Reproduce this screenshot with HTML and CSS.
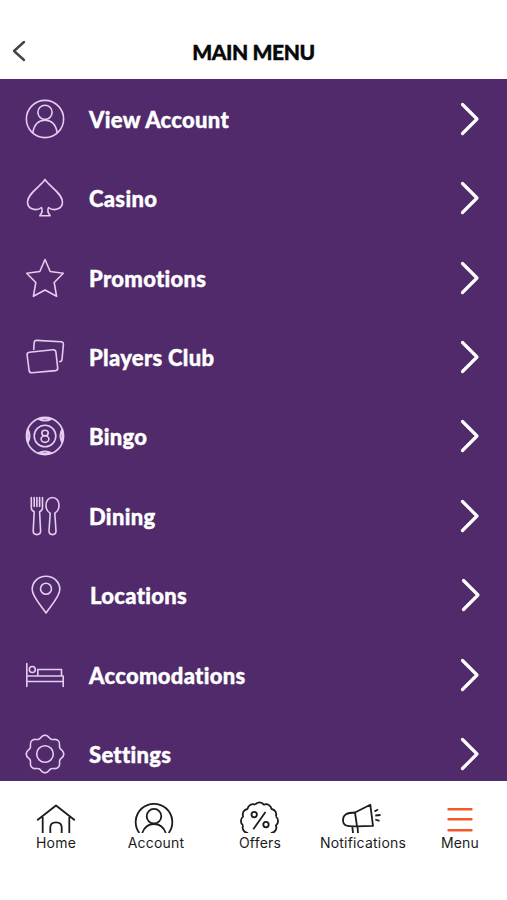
FILE: index.html
```html
<!DOCTYPE html>
<html lang="en">
<head>
    <meta charset="UTF-8">
    <meta name="viewport" content="width=device-width, initial-scale=1.0">
    <title>Main Menu</title>
    <link rel="stylesheet" href="styles.css">
</head>
<body>

<header>
    <a href="#" class="back">
        <svg width="14" height="22" viewBox="0 0 14 22"><path d="M12 2L2 11L12 20"/></svg>
    </a>
    <h1>MAIN MENU</h1>
</header>

<main class="menu">
    <a href="#" class="menu-item">
        <svg class="icon" viewBox="0 0 40 40"><circle cx="20" cy="20" r="18.6"/><circle cx="20" cy="13.3" r="7.1"/><path d="M7.8 33.5C9.2 25.5 13.8 21.2 20 21.2S30.8 25.5 32.2 33.5"/></svg>
        <span>View Account</span>
        <svg class="arrow" viewBox="0 0 20 34"><path d="M2.5 2.5L17 17L2.5 31.5"/></svg>
    </a>
    <a href="#" class="menu-item">
        <svg class="icon" viewBox="0 0 40 40"><path d="M20 1.5C15.5 8.5 2.5 15.5 2.5 24C2.5 31.5 11.5 33.5 16.5 29.5C17.8 32 17 35 14.8 37.8H25.2C23 35 22.2 32 23.5 29.5C28.5 33.5 37.5 31.5 37.5 24C37.5 15.5 24.5 8.5 20 1.5Z"/></svg>
        <span>Casino</span>
        <svg class="arrow" viewBox="0 0 20 34"><path d="M2.5 2.5L17 17L2.5 31.5"/></svg>
    </a>
    <a href="#" class="menu-item">
        <svg class="icon" viewBox="0 0 40 40"><path d="M20 1.5L25.2 13.5L38.3 15.2L29.2 24.5L31.6 38.3L20 32L8.4 38.3L10.8 24.5L1.7 15.2L14.8 13.5Z"/></svg>
        <span>Promotions</span>
        <svg class="arrow" viewBox="0 0 20 34"><path d="M2.5 2.5L17 17L2.5 31.5"/></svg>
    </a>
    <a href="#" class="menu-item">
        <svg class="icon" viewBox="0 0 40 40"><path d="M4.3 15.2L28 12.8Q30.5 12.6 30.9 15L32.7 31Q32.9 33.3 30.5 33.6L7 35.7Q4.5 35.9 4.1 33.5L2.1 18Q1.9 15.5 4.3 15.2Z"/><path d="M8.7 12.5L9.2 5.5Q9.5 3.3 11.7 3.4L36 4.8Q38.6 5 38.4 7.5L37 22.5Q36.8 24.6 34.8 24.6"/></svg>
        <span>Players Club</span>
        <svg class="arrow" viewBox="0 0 20 34"><path d="M2.5 2.5L17 17L2.5 31.5"/></svg>
    </a>
    <a href="#" class="menu-item">
        <svg class="icon" viewBox="0 0 40 40">
            <circle cx="20" cy="20" r="18.6"/><circle cx="20" cy="20" r="10.8"/>
            <ellipse cx="20" cy="17" rx="3.2" ry="2.8"/><ellipse cx="20" cy="23.1" rx="3.9" ry="3.3"/>
            <path d="M13.5 3Q20 6.5 26.5 3M13.5 37Q20 33.5 26.5 37M3 13.5Q6.5 20 3 26.5M37 13.5Q33.5 20 37 26.5M15 2.8H25M15 37.2H25M2.8 15V25M37.2 15V25"/>
        </svg>
        <span>Bingo</span>
        <svg class="arrow" viewBox="0 0 20 34"><path d="M2.5 2.5L17 17L2.5 31.5"/></svg>
    </a>
    <a href="#" class="menu-item">
        <svg class="icon" viewBox="0 0 40 40">
            <path d="M6.3 1.5V11.5Q6.3 14.5 9.2 15.8L8.2 35Q8.2 38.6 11.9 38.6T15.6 35L14.6 15.8Q17.5 14.5 17.5 11.5V1.5M9.2 1.5V10.5M11.9 1.5V10.5M14.6 1.5V10.5"/>
            <path d="M25.2 17.3C22.2 15.5 21 12.5 21 9.5C21 5 23.5 1.5 27.5 1.5S34 5 34 9.5C34 12.5 32.8 15.5 29.8 17.3L31 35Q31 38.6 27.5 38.6T24 35Z"/>
        </svg>
        <span>Dining</span>
        <svg class="arrow" viewBox="0 0 20 34"><path d="M2.5 2.5L17 17L2.5 31.5"/></svg>
    </a>
    <a href="#" class="menu-item shifted">
        <svg class="icon" viewBox="0 0 40 40"><path d="M20 38C15 30.5 6.2 21.5 6.2 14.5C6.2 7 12 1.3 20 1.3S33.8 7 33.8 14.5C33.8 21.5 25 30.5 20 38Z"/><circle cx="20" cy="13.7" r="5.5"/></svg>
        <span>Locations</span>
        <svg class="arrow" viewBox="0 0 20 34"><path d="M2.5 2.5L17 17L2.5 31.5"/></svg>
    </a>
    <a href="#" class="menu-item">
        <svg class="icon" viewBox="0 0 40 40"><path d="M1.8 8.5V31.5M1.8 21H38.2V31.5M1.8 26.5H38.2M12.8 21V14.5H36.5V21"/><circle cx="7.3" cy="14.5" r="3"/></svg>
        <span>Accomodations</span>
        <svg class="arrow" viewBox="0 0 20 34"><path d="M2.5 2.5L17 17L2.5 31.5"/></svg>
    </a>
    <a href="#" class="menu-item">
        <svg class="icon" viewBox="0 0 40 40">
            <path id="cog" d="M20 1.3C24 1.3 23.3 4.05 26.1 5.2C28.9 6.35 30.6 4 33.3 6.7C36 9.4 33.65 11.1 34.8 13.9C35.95 16.7 38.7 16 38.7 20"/>
            <use href="#cog" transform="rotate(90 20 20)"/>
            <use href="#cog" transform="rotate(180 20 20)"/>
            <use href="#cog" transform="rotate(270 20 20)"/>
            <circle cx="20" cy="20" r="8.3"/>
        </svg>
        <span>Settings</span>
        <svg class="arrow" viewBox="0 0 20 34"><path d="M2.5 2.5L17 17L2.5 31.5"/></svg>
    </a>
</main>

<nav class="tabs">
    <a href="#">
        <svg viewBox="0 0 40 32"><path d="M1.2 19.3L20 4.5L38.8 19.3M6.7 16V32M33.3 16V32M14.3 32V26.5Q14.3 21.3 20 21.3T25.7 26.5V32"/></svg>
        Home
    </a>
    <a href="#" class="nudged">
        <svg viewBox="0 0 40 32"><path d="M5.3 32A18.3 18.3 0 1 1 34.7 32M8.2 32Q11.5 23 20 23T31.8 32"/><circle cx="20" cy="15.2" r="7.3"/></svg>
        Account
    </a>
    <a href="#">
        <svg viewBox="0 0 40 32">
            <g transform="translate(19.5 20)">
                <path id="seal" d="M-4.4 -16.4A5.5 5.5 0 0 1 4.4 -16.4A5.5 5.5 0 0 1 12 -12A5.5 5.5 0 0 1 16.4 -4.4"/>
                <use href="#seal" transform="rotate(90)"/>
                <use href="#seal" transform="rotate(180)"/>
                <use href="#seal" transform="rotate(270)"/>
            </g>
            <circle cx="14.2" cy="13.6" r="2.7"/><circle cx="26" cy="23.6" r="2.7"/><path d="M25.5 11L13.3 28.3"/>
        </svg>
        Offers
    </a>
    <a href="#" class="nudged">
        <svg viewBox="0 0 40 32"><path d="M14 11.5L29.3 3.7L32 24.8L16 25.3ZM14 11.5C6 11.5 2 13.5 2 19C2 25 6 25.5 16 25.3M11.3 25.5L12 32M16.5 25.5L17 32M33.5 10.5L37 8.5M34.3 14.5L39.5 14M34.3 18.5L38.5 19.8"/></svg>
        Notifications
    </a>
    <a href="#" class="active">
        <svg viewBox="0 0 40 32"><path d="M8.5 8.3H31.5M8.5 18.3H31.5M8.5 29.3H31.5"/></svg>
        Menu
    </a>
</nav>

</body>
</html>
```
FILE: styles.css
```css
* {
    box-sizing: border-box;
}
body {
    margin: 0;
    height: 900px;
    overflow: hidden;
    background-color: #fff;
    font-family: Lato, sans-serif;
}
a {
    color: inherit;
    text-decoration: none;
}
svg {
    display: block;
    fill: none;
    stroke: currentColor;
    stroke-linecap: round;
    stroke-linejoin: round;
}
header {
    display: grid;
    grid-template-columns: 40px 1fr 40px;
    align-items: center;
    height: 79px;
    padding-top: 23px;
}
.back {
    padding-left: 12px;
    color: #444;
}
.back svg {
    stroke-width: 2.4;
}
h1 {
    margin: 0;
    padding-top: 1px;
    font-size: 21px;
    font-weight: 900;
    line-height: 26px;
    text-align: center;
    letter-spacing: -0.4px;
    -webkit-text-stroke: 0.4px;
    color: #080808;
}
.menu {
    height: 702px;
    overflow: hidden;
    background-color: #502a6b;
    color: #fff;
}
.menu-item {
    display: flex;
    align-items: center;
    height: 79.45px;
    padding: 0 27px 0 25px;
    font-size: 22px;
    font-weight: 900;
    letter-spacing: 0.3px;
    font-variant-ligatures: none;
    -webkit-text-stroke: 0.4px;
}
.menu-item.shifted {
    padding: 0 26px;
}
.menu-item span {
    flex: 1;
    margin-left: 24px;
    padding-top: 1px;
}
.icon {
    width: 40px;
    height: 40px;
    stroke-width: 1.6;
    color: #e4cdf0;
}
.arrow {
    width: 20px;
    height: 34px;
    stroke-width: 3.2;
}
.tabs {
    display: grid;
    grid-template-columns: 100px 100px 108px 98px 96px;
    padding: 20px 0 0 6px;
    font-family: Inter, sans-serif;
    font-size: 14px;
    line-height: 18px;
    letter-spacing: 0.2px;
    color: #1c1c1c;
}
.tabs a {
    display: flex;
    flex-direction: column;
    align-items: center;
}
.tabs svg {
    width: 40px;
    height: 32px;
    margin-bottom: 1px;
    stroke-width: 1.8;
    stroke-linecap: butt;
}
.tabs .nudged svg {
    margin-right: 5px;
}
.tabs .active svg {
    color: #f15a2b;
    stroke-width: 2.4;
    stroke-linecap: round;
}
```
